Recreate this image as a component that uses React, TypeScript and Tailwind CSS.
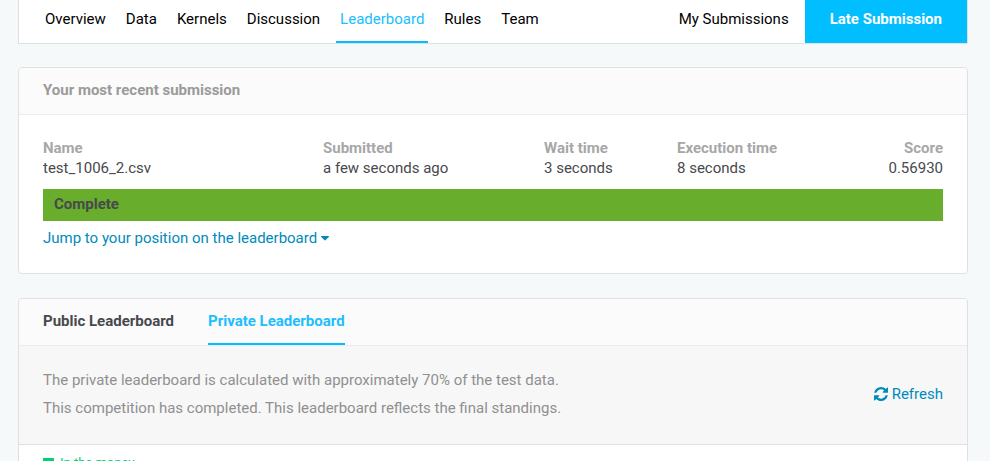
const navItems = ["Overview", "Data", "Kernels", "Discussion", "Leaderboard", "Rules", "Team"];

const columns = [
  { label: "Name", value: "test_1006_2.csv", style: "w-[280px] text-left" },
  { label: "Submitted", value: "a few seconds ago", style: "text-left" },
  { label: "Wait time", value: "3 seconds", style: "w-[133px] text-left" },
  { label: "Execution time", value: "8 seconds", style: "w-[133px] text-left" },
  { label: "Score", value: "0.56930", style: "w-[133px] text-right" },
];

function RefreshIcon() {
  return (
    <svg viewBox="0 0 1536 1536" className="size-3.5" fill="currentColor" aria-hidden="true">
      <path d="M1511 928q0 5-1 7-64 268-268 434.500t-478 166.500q-146 0-282.500-55t-243.500-157l-129 129q-19 19-45 19t-45-19-19-45v-448q0-26 19-45t45-19h448q26 0 45 19t19 45-19 45l-137 137q71 66 161 102t187 36q134 0 250-65t186-179q11-17 53-117 8-23 30-23h192q13 0 22.500 9.500t9.500 22.500zm25-800v448q0 26-19 45t-45 19h-448q-26 0-45-19t-19-45 19-45l138-138q-148-137-349-137-134 0-250 65t-186 179q-11 17-53 117-8 23-30 23h-199q-13 0-22.500-9.500t-9.500-22.500v-7q65-268 270-434.500t480-166.500q146 0 284 55.500t245 156.500l130-129q19-19 45-19t45 19 19 45z" />
    </svg>
  );
}

function CaretIcon() {
  return (
    <svg viewBox="0 0 8 5" className="h-[5px] w-2" fill="currentColor" aria-hidden="true">
      <path d="M.6 0h6.800q.6 0 .6.500 0 .25-.2.450l-3.400 3.400q-.4.350-.8 0L.2.950Q0 .750 0 .500 0 0 .6 0z" />
    </svg>
  );
}

function CompetitionNav() {
  return (
    <nav className="mb-[23px] flex justify-between border border-t-0 border-[#dee0e3] bg-white">
      <ul className="flex gap-3 pl-[22px]">
        {navItems.map((item) => (
          <li key={item}>
            <a
              href="#"
              className={
                item === "Leaderboard"
                  ? "flex h-[43px] border-b-2 border-[#00beff] px-1 pt-2 leading-[22px] text-[#20beff]"
                  : "flex h-[43px] px-1 pt-2 leading-[22px] text-black"
              }
            >
              {item}
            </a>
          </li>
        ))}
      </ul>
      <div className="flex gap-4">
        <a href="#" className="pt-2 leading-[22px] text-black">
          My Submissions
        </a>
        <button type="button" className="flex bg-[#00beff] px-[25px] pt-2 leading-[22px] font-bold text-white">
          Late Submission
        </button>
      </div>
    </nav>
  );
}

function RecentSubmission() {
  return (
    <section className="mb-6 rounded border border-[#dee0e3] bg-white">
      <h2 className="rounded-t border-b border-[#eaebed] bg-[#fbfbfb] px-6 pt-3 pb-[14px] leading-5 font-bold text-[#9a9a9a]">
        Your most recent submission
      </h2>
      <div className="px-6 pt-[23px] pb-[25px]">
        <table className="w-full table-fixed leading-5">
          <thead>
            <tr className="text-[#a7a7a7]">
              {columns.map((c) => (
                <th key={c.label} className={`${c.style} p-0 font-bold`}>
                  {c.label}
                </th>
              ))}
            </tr>
          </thead>
          <tbody>
            <tr>
              {columns.map((c) => (
                <td key={c.label} className={`${c.style} p-0`}>
                  {c.value}
                </td>
              ))}
            </tr>
          </tbody>
        </table>
        <p className="mt-[11px] bg-[#68ad2b] px-[11px] pt-[5px] pb-[7px] leading-5 font-bold">Complete</p>
        <a href="#position" className="mt-[7px] flex w-fit items-center gap-1 leading-5 text-[#008abc]">
          Jump to your position on the leaderboard
          <CaretIcon />
        </a>
      </div>
    </section>
  );
}

function Leaderboard() {
  return (
    <section className="rounded border border-[#dee0e3] bg-white">
      <div role="tablist" className="flex gap-[34px] rounded-t border-b border-[#eaebed] bg-[#fbfbfb] px-6">
        <button type="button" role="tab" aria-selected="false" className="flex h-[46px] pt-3 leading-5 font-bold">
          Public Leaderboard
        </button>
        <button
          type="button"
          role="tab"
          aria-selected="true"
          className="flex h-[46px] border-b-2 border-[#00beff] pt-3 leading-5 font-bold text-[#20beff]"
        >
          Private Leaderboard
        </button>
      </div>
      <div className="flex items-center justify-between border-b border-[#dee0e3] bg-[#f7f7f7] px-6 pt-5 pb-[22px]">
        <div className="leading-7 text-[#909090]">
          <p>The private leaderboard is calculated with approximately 70% of the test data.</p>
          <p>This competition has completed. This leaderboard reflects the final standings.</p>
        </div>
        <button type="button" className="flex items-center gap-1 leading-5 text-[#008abc]">
          <RefreshIcon />
          Refresh
        </button>
      </div>
      <p className="flex items-center gap-[6px] px-6 py-2 text-[13px] leading-5 text-[#00d176]">
        <span className="size-[11px] bg-[#00d176]" />
        In the money
      </p>
    </section>
  );
}

export default function App() {
  return (
    <main className="h-screen overflow-hidden bg-[#f5f9fa] pr-[22px] pl-[18px] font-[Roboto,'Liberation_Sans',sans-serif] text-[15px] text-[#47494d]">
      <CompetitionNav />
      <RecentSubmission />
      <Leaderboard />
    </main>
  );
}
